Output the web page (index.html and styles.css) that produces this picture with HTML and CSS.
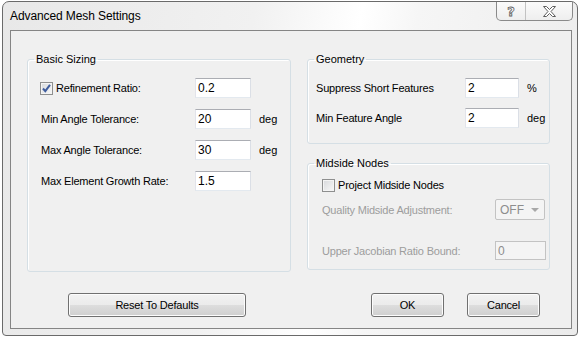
FILE: index.html
```html
<!DOCTYPE html>
<html lang="en">
<head>
    <meta charset="UTF-8">
    <title>Advanced Mesh Settings</title>
    <link rel="stylesheet" href="styles.css">
</head>
<body>
    <div class="window">
        <div class="titlebar">
            <span class="title">Advanced Mesh Settings</span>
            <div class="caption-buttons">
                <span class="cap-btn help">?</span>
                <span class="cap-btn close">
                    <svg width="13" height="11" viewBox="0 0 13 11">
                        <polygon points="0.5,0.5 3.5,0.5 6.5,3.5 9.5,0.5 12.5,0.5 8,5.5 12.5,10.5 9.5,10.5 6.5,7.5 3.5,10.5 0.5,10.5 5,5.5" fill="#fff" stroke="#5e5e5e" stroke-width="1"/>
                    </svg>
                </span>
            </div>
        </div>

        <div class="client">
            <div class="groups">
                <fieldset class="group basic">
                    <legend>Basic Sizing</legend>
                    <div class="row">
                        <label class="label with-check">
                            <span class="check">
                                <svg width="11" height="11" viewBox="0 0 11 11">
                                    <path d="M2 5.5 L4.3 8.2 L9 1.8" fill="none" stroke="#3f5d9e" stroke-width="2"/>
                                </svg>
                            </span>Refinement Ratio:
                        </label>
                        <input class="field" type="text" value="0.2">
                    </div>
                    <div class="row">
                        <span class="label">Min Angle Tolerance:</span>
                        <input class="field" type="text" value="20">
                        <span class="unit">deg</span>
                    </div>
                    <div class="row">
                        <span class="label">Max Angle Tolerance:</span>
                        <input class="field" type="text" value="30">
                        <span class="unit">deg</span>
                    </div>
                    <div class="row">
                        <span class="label">Max Element Growth Rate:</span>
                        <input class="field" type="text" value="1.5">
                    </div>
                </fieldset>

                <div class="right-col">
                    <fieldset class="group geometry">
                        <legend>Geometry</legend>
                        <div class="row">
                            <span class="label">Suppress Short Features</span>
                            <input class="field" type="text" value="2">
                            <span class="unit">%</span>
                        </div>
                        <div class="row">
                            <span class="label">Min Feature Angle</span>
                            <input class="field" type="text" value="2">
                            <span class="unit">deg</span>
                        </div>
                    </fieldset>

                    <fieldset class="group midside">
                        <legend>Midside Nodes</legend>
                        <div class="row check-row">
                            <label class="label with-check">
                                <span class="check"></span>Project Midside Nodes
                            </label>
                        </div>
                        <div class="row combo-row">
                            <span class="label disabled">Quality Midside Adjustment:</span>
                            <div class="combo">
                                <span>OFF</span>
                                <span class="arrow"></span>
                            </div>
                        </div>
                        <div class="row bound-row">
                            <span class="label disabled">Upper Jacobian Ratio Bound:</span>
                            <input class="field off" type="text" value="0" disabled>
                        </div>
                    </fieldset>
                </div>
            </div>

            <div class="buttons">
                <button class="btn reset">Reset To Defaults</button>
                <div class="btn-pair">
                    <button class="btn">OK</button>
                    <button class="btn">Cancel</button>
                </div>
            </div>
        </div>
    </div>
</body>
</html>
```

FILE: styles.css
```css
body {
    margin: 0;
    background: #ffffff;
    font-family: "Liberation Sans", Arial, sans-serif;
    font-size: 11px;
    color: #000000;
}
.window {
    box-sizing: border-box;
    width: 576px;
    height: 335px;
    margin: 1px 0 0 2px;
    border: 1px solid #6a6a6a;
    border-radius: 7px 7px 4px 4px;
    background: linear-gradient(100deg, #e8e8e8 0%, #f1f1f1 40%, #ffffff 57%, #f6f6f6 66%, #ebebeb 100%);
}
.titlebar {
    height: 28px;
    display: flex;
    justify-content: space-between;
    align-items: flex-start;
}
.title {
    padding: 6px 0 0 7px;
    font-size: 12px;
    line-height: 16px;
    letter-spacing: -0.1px;
}
.caption-buttons {
    display: flex;
    height: 18px;
    margin-right: 4px;
    border: 1px solid #8a8a8a;
    border-top: none;
    border-radius: 0 0 5px 5px;
    background: linear-gradient(#fbfbfb, #eeeeee);
}
.cap-btn {
    display: flex;
    align-items: center;
    justify-content: center;
}
.help {
    width: 28px;
    border-right: 1px solid #c2c2c2;
    font-family: "DejaVu Sans", sans-serif;
    font-weight: bold;
    font-size: 13px;
    color: #ffffff;
    -webkit-text-stroke: 0.8px #5e5e5e;
}
.close {
    width: 46px;
}
.client {
    box-sizing: border-box;
    height: 299px;
    margin: 0 5px 0 7px;
    border: 1px solid #858585;
    background: #f0f0f0;
    padding: 21px 21px 11px 16px;
}
.groups {
    display: flex;
    gap: 16px;
    align-items: flex-start;
}
.group {
    box-sizing: border-box;
    margin: 0;
    min-width: 0;
    border: 1px solid #d5dfe5;
    border-radius: 3px;
    box-shadow: inset 1px 1px 0 #ffffff;
}
.group legend {
    padding: 0 2px;
    line-height: 14px;
}
.basic {
    width: 264px;
    height: 220px;
    padding: 12px 0 0 13px;
}
.basic legend {
    margin-left: -7px;
}
.right-col {
    display: flex;
    flex-direction: column;
    gap: 12px;
}
.geometry {
    width: 243px;
    height: 92px;
    padding: 12px 0 0 8px;
}
.geometry legend {
    margin-left: -2px;
}
.midside {
    width: 243px;
    height: 114px;
    padding: 6px 0 0 14px;
}
.midside legend {
    margin-left: -8px;
}
.row {
    display: flex;
    align-items: center;
    height: 20px;
}
.basic .row + .row {
    margin-top: 11px;
}
.geometry .row + .row {
    margin-top: 10px;
}
.label {
    letter-spacing: -0.2px;
    white-space: nowrap;
}
.basic .label {
    width: 154px;
}
.geometry .label {
    width: 149px;
}
.midside .label {
    width: 173px;
}
.with-check {
    display: flex;
    align-items: center;
}
.basic .with-check {
    margin-left: -1px;
    width: 155px;
}
.check {
    box-sizing: border-box;
    width: 13px;
    height: 13px;
    margin-right: 3px;
    border: 1px solid #8e8f8f;
    background: linear-gradient(135deg, #d7d9dc, #f8f8f8);
    box-shadow: inset 0 0 0 1px #f4f4f4;
    display: flex;
    align-items: center;
    justify-content: center;
}
.disabled {
    color: #9d9d9d;
}
.field {
    box-sizing: border-box;
    width: 56px;
    height: 20px;
    margin: 0;
    padding: 0 0 0 2px;
    border: 1px solid;
    border-color: #abadb3 #dbdfe6 #e3e9ef #e2e3ea;
    background: #ffffff;
    font-family: "Liberation Sans", Arial, sans-serif;
    font-size: 12px;
    color: #000000;
    outline: none;
}
.geometry .field {
    width: 54px;
}
.unit {
    margin-left: 8px;
}
.check-row {
    height: 18px;
}
.combo-row {
    height: 21px;
    margin-top: 5px;
}
.bound-row {
    height: 19px;
    margin-top: 21px;
}
.combo {
    box-sizing: border-box;
    width: 50px;
    height: 21px;
    padding: 0 5px 0 4px;
    border: 1px solid #c3c3c3;
    border-radius: 2px;
    background: #f4f4f4;
    color: #8d8d8d;
    font-size: 12px;
    display: flex;
    align-items: center;
    justify-content: space-between;
}
.arrow {
    width: 0;
    height: 0;
    border-left: 4px solid transparent;
    border-right: 4px solid transparent;
    border-top: 4px solid #a8a8a8;
}
.field.off {
    width: 51px;
    height: 19px;
    border: 1px solid #c3c3c3;
    background: #f4f4f4;
    color: #8d8d8d;
}
.buttons {
    display: flex;
    justify-content: space-between;
    margin-top: 21px;
    padding: 0 10px 0 41px;
}
.btn-pair {
    display: flex;
    gap: 23px;
}
.btn {
    box-sizing: border-box;
    width: 73px;
    height: 24px;
    margin: 0;
    padding: 0;
    border: 1px solid #707070;
    border-radius: 3px;
    background: linear-gradient(#f2f2f2 0%, #ebebeb 50%, #dddddd 51%, #cfcfcf 100%);
    box-shadow: inset 0 0 0 1px #fcfcfc;
    font-family: "Liberation Sans", Arial, sans-serif;
    font-size: 11px;
    letter-spacing: -0.2px;
    color: #000000;
}
.btn.reset {
    width: 178px;
}
```
